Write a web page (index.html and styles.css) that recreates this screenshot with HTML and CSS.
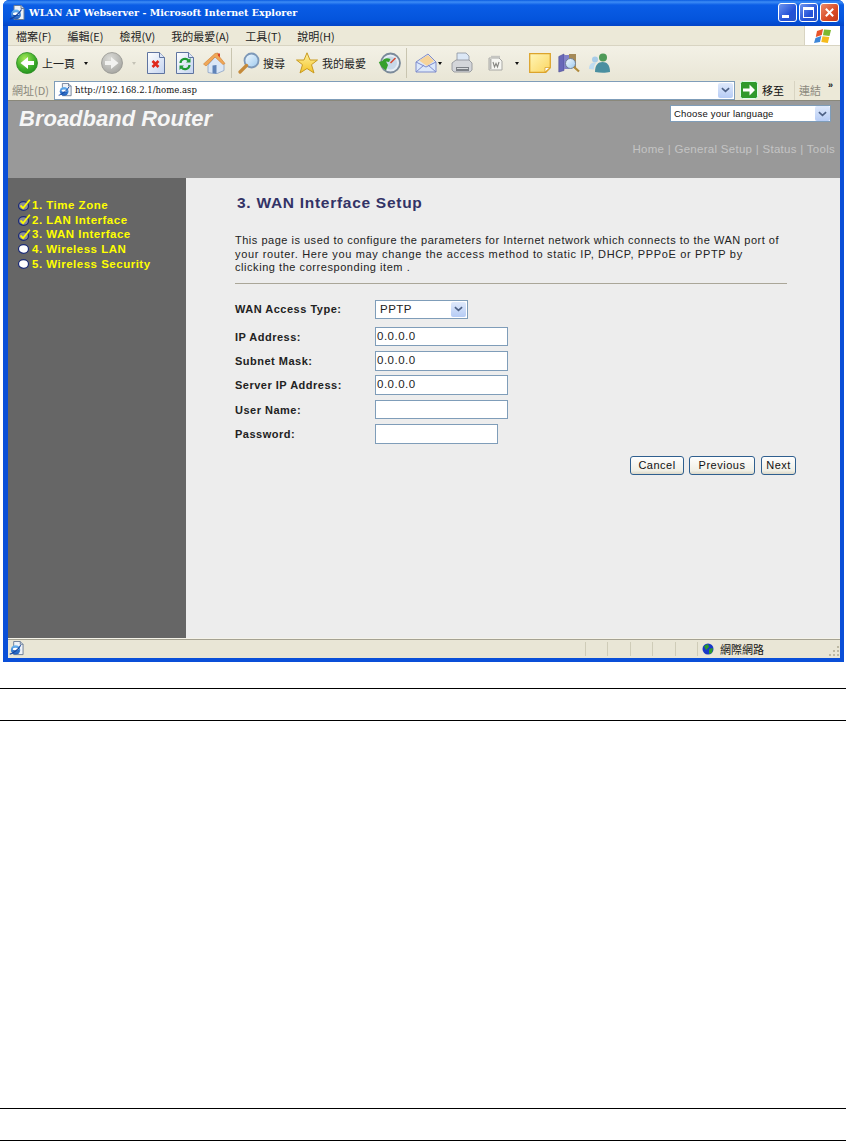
FILE: index.html
```html
<!DOCTYPE html>
<html lang="zh-Hant">
<head>
<meta charset="utf-8">
<title>WLAN AP Webserver</title>
<link rel="stylesheet" href="styles.css">
</head>
<body>
<svg class="defs" width="0" height="0" aria-hidden="true">
  <defs>
    <radialGradient id="gGreen" cx=".4" cy=".3" r=".8"><stop offset="0" stop-color="#a6e85a"/><stop offset=".6" stop-color="#3fae2a"/><stop offset="1" stop-color="#1c8a1e"/></radialGradient>
    <radialGradient id="gGray" cx=".4" cy=".3" r=".8"><stop offset="0" stop-color="#dcdcd8"/><stop offset="1" stop-color="#a0a09c"/></radialGradient>
    <linearGradient id="gPage" x1="0" y1="0" x2="1" y2="1"><stop offset="0" stop-color="#fff"/><stop offset="1" stop-color="#c4d4f0"/></linearGradient>
    <linearGradient id="gStar" x1="0" y1="0" x2="0" y2="1"><stop offset="0" stop-color="#fff2a0"/><stop offset="1" stop-color="#f4c428"/></linearGradient>
    <linearGradient id="gNote" x1="0" y1="0" x2="1" y2="1"><stop offset="0" stop-color="#fff6b8"/><stop offset="1" stop-color="#fbd560"/></linearGradient>
    <linearGradient id="gLens" x1="0" y1="0" x2="1" y2="1"><stop offset="0" stop-color="#f4fbff"/><stop offset="1" stop-color="#9cc8ee"/></linearGradient>
    <linearGradient id="gE" x1="0" y1="0" x2="0" y2="1"><stop offset="0" stop-color="#6cb8f4"/><stop offset="1" stop-color="#1a58b8"/></linearGradient>
    <symbol id="iePage" viewBox="0 0 16 16"><path d="M5 .5h7l3 3v11H5z" fill="#eef2f8" stroke="#6b7c94"/><path d="M12 .5v3h3" fill="#c8d4e4" stroke="#6b7c94"/><circle cx="7" cy="9.500" r="5" fill="url(#gE)"/><ellipse cx="7" cy="8.800" rx="3" ry="1.500" fill="#fff"/><path d="M4 10h6.500v1H4z" fill="#1a58b8"/><path d="M.8 14C4 13.500 10 9 12.500 4.500" fill="none" stroke="#14409a" stroke-width="1.100"/></symbol>
  </defs>
</svg>
<div class="window">
  <div class="titlebar">
    <svg class="title-ie"><use href="#iePage"/></svg>
    <span class="title-text">WLAN AP Webserver - Microsoft Internet Explorer</span>
    <div class="caption-btns">
      <span class="cap cap-blue"><i class="cap-min"></i></span>
      <span class="cap cap-blue"><i class="cap-max"></i></span>
      <span class="cap cap-red"><svg viewBox="0 0 12 12"><path d="M2 2l8 8M10 2l-8 8" stroke="#fff" stroke-width="2.200"/></svg></span>
    </div>
  </div>
  <div class="inner">
    <div class="menubar">
      <span class="menu">檔案(F)</span><span class="menu">編輯(E)</span><span class="menu">檢視(V)</span><span class="menu">我的最愛(A)</span><span class="menu">工具(T)</span><span class="menu">說明(H)</span>
      <span class="flag"><svg viewBox="0 0 18 16"><path d="M3 3l6-2-1.200 6-6 2z" fill="#e8542a"/><path d="M10 1.500l7 .5-1.500 6-6.500-.8z" fill="#7cb82f"/><path d="M1.500 10l5.800-2-1.300 6-6 1z" fill="#3d86d8"/><path d="M8.500 8.200l6.800.8-1.500 6-6.500-1z" fill="#f5bb1c"/></svg></span>
    </div>
    <div class="toolbar">
      <svg class="tb-nav" viewBox="0 0 22 22"><circle cx="11" cy="11" r="10.500" fill="url(#gGreen)" stroke="#2a8a20" stroke-width=".8"/><path d="M18 9h-6V5l-7.500 6 7.500 6v-4h6z" fill="#fff"/></svg>
      <span class="tb-label tb-l-back">上一頁</span>
      <span class="caret caret-back"></span>
      <svg class="tb-nav tb-fwd" viewBox="0 0 22 22"><circle cx="11" cy="11" r="10.500" fill="url(#gGray)" stroke="#959590" stroke-width=".8"/><path d="M4 9h6V5l7.500 6-7.500 6v-4H4z" fill="#f2f2f0"/></svg>
      <span class="caret caret-dim"></span>
      <svg class="tb-icon tb-stop" viewBox="0 0 18 22"><path d="M.5.5h12l5 5v16H.5z" fill="url(#gPage)" stroke="#5f74a0"/><path d="M12.500.5v5h5" fill="#dde6f6" stroke="#5f74a0"/><path d="M5.500 9l6 6M11.500 9l-6 6" stroke="#e0281c" stroke-width="2.600"/></svg>
      <svg class="tb-icon tb-refresh" viewBox="0 0 18 22"><path d="M.5.500h12l5 5v16H.5z" fill="url(#gPage)" stroke="#5f74a0"/><path d="M12.500.500v5h5" fill="#dde6f6" stroke="#5f74a0"/><path d="M4.500 11a4.500 4.500 0 0 1 8-2.500" fill="none" stroke="#1f9a34" stroke-width="2.200"/><path d="M14.500 6v4.500H10z" fill="#1f9a34"/><path d="M13.500 13a4.500 4.500 0 0 1-8 2.500" fill="none" stroke="#1f9a34" stroke-width="2.200"/><path d="M3.500 18v-4.500H8z" fill="#1f9a34"/></svg>
      <svg class="tb-icon tb-home" viewBox="0 0 23 22"><path d="M5 13v7.500l8 1.500 8-3.500V12L13 4z" fill="#dbe7f6" stroke="#8ba2c4" stroke-width=".8"/><path d="M.5 12L12 1.500 15 1v2l7 8.500-2 1L12 5 3 14z" fill="#f0a858" stroke="#cc7c30" stroke-width=".6"/><path d="M15 1.500h2v4l-2-2z" fill="#d8452c"/><path d="M9.500 13.500l4-.5v9l-4-1z" fill="#5f83b8"/></svg>
      <i class="tb-sep tb-sep-a"></i>
      <svg class="tb-icon tb-search" viewBox="0 0 22 22"><circle cx="13.500" cy="8.500" r="7" fill="url(#gLens)" stroke="#7d98b8" stroke-width="1.800"/><path d="M8.500 13.500L2 20" stroke="#c58a3a" stroke-width="3.200" stroke-linecap="round"/></svg>
      <span class="tb-label tb-l-search">搜尋</span>
      <svg class="tb-icon tb-star" viewBox="0 0 22 22"><path d="M11 .8l3 7.200h7.500l-6 4.700 2.500 8.300L11 16.500 4 21l2.500-8.300-6-4.700H8z" fill="url(#gStar)" stroke="#c89a22"/></svg>
      <span class="tb-label tb-l-fav">我的最愛</span>
      <svg class="tb-icon tb-hist" viewBox="0 0 23 22"><circle cx="12.500" cy="11" r="9.500" fill="#e6edf4" stroke="#7b8a9a" stroke-width="1.800"/><circle cx="12.500" cy="11" r="6.500" fill="#c8d8e8"/><path d="M.8 10l3.500-1C6 6 9 5.500 12.500 7l-1.500 3-3-.5L10 13l-2 5.500C4.500 16 2 13.500.8 10z" fill="#36a02c"/><path d="M12.500 11l5-5" stroke="#d8452c" stroke-width="1.400"/></svg>
      <i class="tb-sep tb-sep-b"></i>
      <svg class="tb-icon tb-mail" viewBox="0 0 22 22"><path d="M1 10L13 2l8 8v10H1z" fill="#dce8fa" stroke="#7f8ccc"/><path d="M4 8.500l9-5.500 6 6-7 5z" fill="#f6d49a"/><path d="M1 10l10 5 10-5M1 20l8-7M21 20l-8-7" fill="none" stroke="#7f8ccc"/></svg>
      <span class="caret caret-mail"></span>
      <svg class="tb-icon tb-print" viewBox="0 0 22 22"><path d="M6 1h9l3 3v7H6z" fill="#dce8f6" stroke="#8a93a0" stroke-width=".8"/><path d="M1 11l4-3h13l3 3v7l-2 2H3l-2-2z" fill="#d4d6da" stroke="#8a8e94" stroke-width=".8"/><path d="M5 15h13v4H5z" fill="#7c8086"/><path d="M6 16.500h11" stroke="#d8dadc"/></svg>
      <svg class="tb-icon tb-word" viewBox="0 0 16 16"><path d="M1 3h10l3 3v9H1z" fill="#f6f6f2" stroke="#a8a8a4"/><path d="M3 .8h9v2.200H3z" fill="#c4c4c0"/><path d="M1.500 4v10h2V4z" fill="#b4b4b0"/><path d="M5 7l1.500 5L8 8.500 9.500 12 11 7" fill="none" stroke="#868682" stroke-width="1.100"/></svg>
      <span class="caret caret-word"></span>
      <svg class="tb-icon tb-note" viewBox="0 0 22 20"><path d="M.7.700h20.600v14l-4.500 4.600H.7z" fill="url(#gNote)" stroke="#dca42c" stroke-width="1.300"/><path d="M21 14.500h-5v4.500z" fill="#fff" stroke="#dca42c" stroke-width=".8"/></svg>
      <svg class="tb-icon tb-research" viewBox="0 0 22 20"><path d="M.8 3.500L6 1v16.500L.8 19z" fill="#6868b8" stroke="#4c4c94" stroke-width=".6"/><path d="M6 2h5v14H6z" fill="#8282c8"/><path d="M11 1h7v14h-7z" fill="#a58a58"/><circle cx="12.500" cy="10.500" r="5" fill="url(#gLens)" stroke="#6f7f96"/><path d="M16 14l5 4.500" stroke="#b08a3a" stroke-width="2.200"/></svg>
      <svg class="tb-icon tb-msn" viewBox="0 0 23 20"><circle cx="15" cy="4.500" r="4" fill="#4f9a58"/><path d="M7 19c0-7 3-10 7.500-10S22 12 22 19c-4 1-10 1-15 0z" fill="#4a8fa0"/><circle cx="7" cy="6.500" r="3" fill="#a8cce8"/><path d="M1 16c0-4 2-6.500 5.500-6.500.5 0 1 .2 1.500.5-1.500 2-2.200 4-2.200 6.500z" fill="#c0dcf0"/></svg>
    </div>
    <div class="addressbar">
      <span class="addr-label">網址(D)</span>
      <div class="addr-box">
        <svg class="addr-ie"><use href="#iePage"/></svg>
        <span class="addr-url">http://192.168.2.1/home.asp</span>
        <span class="combo-arrow addr-arrow"><svg viewBox="0 0 10 6"><path d="M1 1l4 3.500L9 1" fill="none" stroke="#4d6185" stroke-width="1.800"/></svg></span>
      </div>
      <span class="go-btn"><svg viewBox="0 0 18 18"><rect x=".5" y=".5" width="17" height="17" rx="2" fill="#2f9a2c" stroke="#dfe"/><path d="M3 7.500h6.500V3.500l5.500 5.500-5.500 5.500v-4H3z" fill="#fff"/></svg></span>
      <span class="go-label">移至</span>
      <span class="links">連結</span>
      <span class="chev">»</span>
    </div>
    <div class="page">
      <header class="router-head">
        <h1 class="brand">Broadband Router</h1>
        <div class="head-right">
          <div class="lang-select">
            <span>Choose your language</span>
            <span class="combo-arrow"><svg viewBox="0 0 10 6"><path d="M1 1l4 3.500L9 1" fill="none" stroke="#4d6185" stroke-width="1.800"/></svg></span>
          </div>
          <nav class="topnav">Home | General Setup | Status | Tools</nav>
        </div>
      </header>
      <div class="page-body">
        <aside class="sidebar">
          <div class="step"><svg class="bullet" viewBox="0 0 13 12"><ellipse cx="5.500" cy="7" rx="5" ry="4.300" fill="#8c8c98" stroke="#1c2c78" stroke-width="1.200"/><path d="M2.500 6.500l2.500 2.700L11.800.8" fill="none" stroke="#ffff00" stroke-width="1.800"/></svg>1. Time Zone</div>
          <div class="step"><svg class="bullet" viewBox="0 0 13 12"><ellipse cx="5.500" cy="7" rx="5" ry="4.300" fill="#8c8c98" stroke="#1c2c78" stroke-width="1.200"/><path d="M2.500 6.500l2.500 2.700L11.800.8" fill="none" stroke="#ffff00" stroke-width="1.800"/></svg>2. LAN Interface</div>
          <div class="step"><svg class="bullet" viewBox="0 0 13 12"><ellipse cx="5.500" cy="7" rx="5" ry="4.300" fill="#8c8c98" stroke="#1c2c78" stroke-width="1.200"/><path d="M2.500 6.500l2.500 2.700L11.800.8" fill="none" stroke="#ffff00" stroke-width="1.800"/></svg>3. WAN Interface</div>
          <div class="step"><svg class="bullet" viewBox="0 0 13 12"><ellipse cx="5.500" cy="6" rx="5" ry="4.300" fill="#fff" stroke="#1c2c78" stroke-width="1.200"/></svg>4. Wireless LAN</div>
          <div class="step"><svg class="bullet" viewBox="0 0 13 12"><ellipse cx="5.500" cy="6" rx="5" ry="4.300" fill="#fff" stroke="#1c2c78" stroke-width="1.200"/></svg>5. Wireless Security</div>
        </aside>
        <main class="content">
          <h2 class="heading">3. WAN Interface Setup</h2>
          <p class="intro"><span class="intro-l1">This page is used to configure the parameters for Internet network which connects to the WAN port of</span><br><span class="intro-l2">your router. Here you may change the access method to static IP, DHCP, PPPoE or PPTP by</span><br>clicking the corresponding item .</p>
          <hr class="rule">
          <div class="form">
            <label class="row row-select"><span class="lbl">WAN Access Type:</span>
              <span class="wan-select"><span>PPTP</span><span class="combo-arrow"><svg viewBox="0 0 10 6"><path d="M1 1l4 3.500L9 1" fill="none" stroke="#4d6185" stroke-width="1.800"/></svg></span></span></label>
            <label class="row"><span class="lbl">IP Address:</span><span class="field">0.0.0.0</span></label>
            <label class="row"><span class="lbl">Subnet Mask:</span><span class="field">0.0.0.0</span></label>
            <label class="row"><span class="lbl">Server IP Address:</span><span class="field">0.0.0.0</span></label>
            <label class="row"><span class="lbl">User Name:</span><span class="field"></span></label>
            <label class="row"><span class="lbl">Password:</span><span class="field field-short"></span></label>
          </div>
          <div class="actions">
            <span class="btn">Cancel</span><span class="btn btn-prev">Previous</span><span class="btn btn-next">Next</span>
          </div>
        </main>
      </div>
    </div>
    <div class="statusbar">
      <svg class="status-ie"><use href="#iePage"/></svg>
      <div class="status-cells"><i></i><i></i><i></i><i></i><i></i><i></i></div>
      <svg class="globe" viewBox="0 0 12 12"><circle cx="6" cy="6" r="5.500" fill="#1838c8"/><path d="M2 3l4-2 1 3-3 3zM7 6l4-1-1 5-3 1z" fill="#2c9c28"/></svg>
      <span class="zone">網際網路</span>
      <svg class="grip" viewBox="0 0 12 12"><path d="M9 1h2v2H9zM5 5h2v2H5zM9 5h2v2H9zM1 9h2v2H1zM5 9h2v2H5zM9 9h2v2H9z" fill="#bdb9a4"/></svg>
    </div>
  </div>
</div>
<div class="doc-lines doc-lines-a"></div>
<div class="doc-lines doc-lines-b"></div>
</body>
</html>
```
FILE: styles.css
```css
* { box-sizing: border-box; }
html, body { margin: 0; padding: 0; background: #fff; }
body { width: 846px; height: 1142px; overflow: hidden; font-family: "Liberation Sans", Arial, sans-serif; }
.defs { position: absolute; }
.window { margin-left: 3px; width: 841px; height: 662px; background: #0a4fd8; border-radius: 6px 6px 0 0; display: flex; flex-direction: column; padding: 0 4px 4px 0; }
.titlebar { height: 26px; margin-right: -4px; background: linear-gradient(#0a5be0 0, #3d8cf5 2px, #0a5de6 5px, #0454dc 20px, #0345c8 26px); border-radius: 6px 6px 0 0; display: flex; align-items: center; padding: 0 5px 1px 6px; }
.title-ie { width: 16px; height: 16px; margin-right: 4px; flex: none; }
.title-text { font-family: "DejaVu Serif", "Liberation Serif", serif; font-size: 9.500px; font-weight: 700; color: #fff; white-space: nowrap; }
.caption-btns { margin-left: auto; display: flex; gap: 2px; }
.cap { width: 19px; height: 19px; border: 1px solid #fff; border-radius: 3px; display: flex; align-items: center; justify-content: center; }
.cap-blue { background: linear-gradient(135deg, #6f95ee, #2452d8 60%, #2a55c8); }
.cap-red { background: linear-gradient(135deg, #ec8a6a, #d84a24 60%, #c43a1c); }
.cap-red svg { width: 11px; height: 11px; }
.cap-min { width: 7px; height: 3px; background: #fff; margin: 8px 5px 0 0; }
.cap-max { width: 11px; height: 11px; border: 1px solid #fff; border-top-width: 3px; }
.inner { flex: 1; margin-left: 5px; display: flex; flex-direction: column; background: #ece9d8; min-height: 0; }
.menubar { height: 20px; display: flex; align-items: center; padding-left: 8px; background: #ece9d8; border-bottom: 1px solid #d8d4c2; font-family: "Noto Sans CJK TC", sans-serif; font-size: 11px; color: #222; }
.menu { margin-right: 16px; white-space: nowrap; }
.flag { margin: 0 0 0 auto; width: 36px; height: 19px; background: #fff; border-left: 1px solid #d8d4c2; display: flex; align-items: center; justify-content: center; }
.flag svg { width: 18px; height: 16px; }
.toolbar { height: 34px; display: flex; align-items: center; padding-left: 8px; font-family: "Noto Sans CJK TC", sans-serif; font-size: 11px; color: #222; background: linear-gradient(#f3f1e6, #e9e6d6); }
.tb-nav { width: 22px; height: 22px; flex: none; }
.tb-label { white-space: nowrap; }
.tb-l-back { margin-left: 4px; }
.caret { width: 0; height: 0; flex: none; border-left: 2.500px solid transparent; border-right: 2.500px solid transparent; border-top: 3px solid #111; margin-left: 9px; }
.caret-dim { border-top-color: #c4c2b6; margin-left: 9px; }
.tb-fwd { margin-left: 13px; }
.tb-icon { flex: none; }
.tb-stop { width: 18px; height: 22px; margin-left: 11px; }
.tb-refresh { width: 18px; height: 22px; margin-left: 11px; }
.tb-home { width: 23px; height: 22px; margin-left: 9px; }
.tb-sep { width: 1px; height: 30px; background: #c9c5b0; flex: none; }
.tb-sep-a { margin-left: 5px; }
.tb-search { width: 22px; height: 22px; margin-left: 6px; }
.tb-l-search { margin-left: 3px; }
.tb-star { width: 22px; height: 22px; margin-left: 11px; }
.tb-l-fav { margin-left: 4px; }
.tb-hist { width: 23px; height: 22px; margin-left: 12px; }
.tb-sep-b { margin-left: 5px; }
.tb-mail { width: 22px; height: 22px; margin-left: 8px; }
.caret-mail { margin-left: 1px; }
.tb-print { width: 22px; height: 22px; margin-left: 9px; }
.tb-word { width: 16px; height: 16px; margin-left: 15px; }
.caret-word { margin-left: 11px; }
.tb-note { width: 22px; height: 20px; margin-left: 10px; }
.tb-research { width: 22px; height: 20px; margin-left: 7px; }
.tb-msn { width: 23px; height: 20px; margin-left: 8px; }
.addressbar { height: 20px; display: flex; align-items: center; font-family: "Noto Sans CJK TC", sans-serif; font-size: 11px; padding-left: 4px; background: #ece9d8; }
.addr-label { color: #8a887c; width: 42px; white-space: nowrap; }
.addr-box { width: 681px; height: 19px; background: #fff; border: 1px solid #7f9db9; display: flex; align-items: center; padding: 0 1px 0 3px; }
.addr-ie { width: 14px; height: 14px; margin-right: 3px; flex: none; }
.addr-url { font-family: "DejaVu Serif", "Liberation Serif", serif; font-size: 8.500px; color: #111; }
.combo-arrow { width: 15px; height: 15px; border-radius: 2px; background: linear-gradient(#dfe9fb, #b6ccf5); display: flex; align-items: center; justify-content: center; flex: none; margin-left: auto; }
.combo-arrow svg { width: 9px; height: 6px; }
.go-btn { width: 18px; height: 18px; margin-left: 5px; }
.go-btn svg { display: block; }
.go-label { margin-left: 4px; color: #111; }
.links { margin-left: 10px; padding-left: 4px; color: #8a887c; border-left: 1px solid #d8d4c2; white-space: nowrap; line-height: 19px; }
.chev { margin-left: 7px; font: 700 9px "Liberation Sans", sans-serif; color: #111; align-self: flex-start; }
.page { flex: 1; display: flex; flex-direction: column; min-height: 0; background: #ededed; border-top: 1px solid #8a887a; }
.router-head { height: 77px; flex: none; background: #999; display: flex; justify-content: space-between; padding: 0 5px 0 11px; }
.brand { margin: 5px 0 0; font-size: 22px; line-height: 26px; font-weight: 700; font-style: italic; color: #f6f6f6; }
.head-right { display: flex; flex-direction: column; align-items: flex-end; }
.lang-select { width: 161px; height: 17px; margin: 4px 4px 0 0; background: #fff; border: 1px solid #7f9db9; display: flex; align-items: center; padding: 0 0 0 3px; font-size: 9.500px; color: #111; letter-spacing: .2px; }
.topnav { margin-top: 19px; font-size: 11.500px; line-height: 16px; color: #c4c4c4; letter-spacing: .28px; white-space: nowrap; }
.page-body { flex: 1; display: flex; min-height: 0; }
.sidebar { width: 178px; flex: none; background: #666; padding-top: 20px; font-size: 11.500px; font-weight: 700; color: #ff0; letter-spacing: .5px; }
.step { height: 14.700px; line-height: 15px; padding-left: 10px; display: flex; align-items: center; white-space: nowrap; }
.bullet { width: 13px; height: 12px; margin-right: 1px; flex: none; }
.content { flex: 1; padding: 0 44px 0 49px; min-width: 0; }
.heading { margin: 16px 0 0 2px; font-size: 15.500px; line-height: 18px; font-weight: 700; color: #333366; letter-spacing: .72px; white-space: nowrap; }
.intro { margin: 22px 0 0; font-size: 11px; line-height: 13.500px; color: #222; letter-spacing: .55px; white-space: nowrap; }
.intro-l1 { letter-spacing: .51px; }
.intro-l2 { letter-spacing: .65px; }
.rule { margin: 8px 9px 0 0; border: 0; height: 1px; background: #aaa698; }
.form { margin-top: 16px; }
.row { display: flex; align-items: center; height: 24.300px; font-size: 11px; font-weight: 700; color: #222; letter-spacing: .5px; }
.row-select { height: 19px; margin-bottom: 6px; }
.lbl { width: 140px; flex: none; white-space: nowrap; }
.wan-select { width: 93px; height: 19px; background: #fff; border: 1px solid #7f9db9; display: flex; align-items: center; padding: 0 1px 0 4px; font-size: 11.500px; font-weight: 400; }
.field { width: 133px; height: 19.500px; background: #fff; border: 1px solid #7f9db9; font-size: 11.500px; font-weight: 400; line-height: 17px; padding-left: 1px; letter-spacing: .5px; color: #222; }
.field-short { width: 123px; }
.actions { display: flex; justify-content: flex-end; gap: 5px; margin: 10px 0 0; font-size: 11px; letter-spacing: .5px; color: #111; }
.btn { width: 54px; height: 19px; display: flex; align-items: center; justify-content: center; border: 1px solid #2f5f8f; border-radius: 3px; background: linear-gradient(#fefefe, #f0efe6 80%, #dcd8c8); }
.btn-prev { width: 66px; }
.btn-next { width: 35px; margin-left: 1px; }
.statusbar { height: 20px; flex: none; display: flex; align-items: center; padding: 0 0 0 1px; border-top: 1px solid #f5f3e8; box-shadow: inset 0 1px #a5a292; background: #e9e6d6; font-family: "Noto Sans CJK TC", sans-serif; font-size: 11px; color: #111; }
.status-ie { width: 15px; height: 15px; flex: none; }
.status-cells { display: flex; margin-left: 561px; }
.status-cells i { width: 22.400px; height: 14px; border-left: 1px solid #cfccb8; }
.status-cells i:last-child { width: 5px; }
.globe { width: 12px; height: 12px; flex: none; }
.zone { margin-left: 6px; }
.grip { width: 12px; height: 12px; margin-left: auto; margin-top: 5px; }
.doc-lines { height: 33px; border-top: 1px solid #000; border-bottom: 1px solid #000; }
.doc-lines-a { margin-top: 26px; }
.doc-lines-b { margin-top: 387px; }
```
